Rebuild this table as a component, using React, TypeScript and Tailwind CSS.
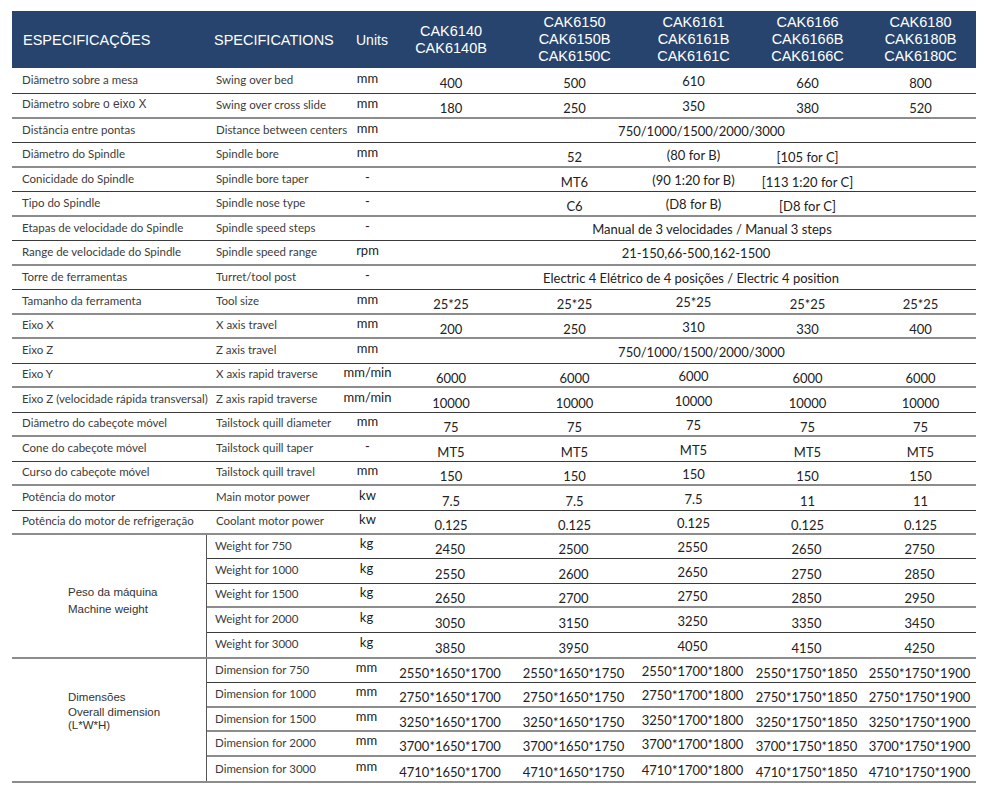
import React from 'react';

type Row = {
  pt: React.ReactNode;
  en: string;
  unit: string;
  vals?: string[];
  span?: string;
  spanPad?: string;
  line: 'dark' | 'grey';
};

const models = [
  ['CAK6140', 'CAK6140B'],
  ['CAK6150', 'CAK6150B', 'CAK6150C'],
  ['CAK6161', 'CAK6161B', 'CAK6161C'],
  ['CAK6166', 'CAK6166B', 'CAK6166C'],
  ['CAK6180', 'CAK6180B', 'CAK6180C'],
];

const valWidths = ['w-[122px]', 'w-[125px]', 'w-[113px]', 'w-[115px]', 'w-[111px]'];

const five = (v: string) => [v, v, v, v, v];

const rows: Row[] = [
  { pt: 'Diâmetro sobre a mesa', en: 'Swing over bed', unit: 'mm', vals: ['400', '500', '610', '660', '800'], line: 'dark' },
  {
    pt: (
      <span>
        Diâmetro sobre{' '}
        <span className="font-['Liberation_Sans',Arial,sans-serif] text-[12px]">o eixo X</span>
      </span>
    ),
    en: 'Swing over cross slide',
    unit: 'mm',
    vals: ['180', '250', '350', '380', '520'],
    line: 'grey',
  },
  { pt: 'Distância entre pontas', en: 'Distance between centers', unit: 'mm', span: '750/1000/1500/2000/3000', spanPad: 'pl-[37px]', line: 'dark' },
  { pt: 'Diâmetro do Spindle', en: 'Spindle bore', unit: 'mm', vals: ['', '52', '(80 for B)', '[105 for C]', ''], line: 'grey' },
  { pt: 'Conicidade do Spindle', en: 'Spindle bore taper', unit: '-', vals: ['', 'MT6', '(90 1:20 for B)', '[113 1:20 for C]', ''], line: 'dark' },
  { pt: 'Tipo do Spindle', en: 'Spindle nose type', unit: '-', vals: ['', 'C6', '(D8 for B)', '[D8 for C]', ''], line: 'grey' },
  { pt: 'Etapas de velocidade do Spindle', en: 'Spindle speed steps', unit: '-', span: 'Manual de 3 velocidades / Manual 3 steps', spanPad: 'pl-[58px]', line: 'dark' },
  { pt: 'Range de velocidade do Spindle', en: 'Spindle speed range', unit: 'rpm', span: '21-150,66-500,162-1500', spanPad: 'pl-[26px]', line: 'grey' },
  { pt: 'Torre de ferramentas', en: 'Turret/tool post', unit: '-', span: 'Electric 4 Elétrico de 4 posições / Electric 4 position', spanPad: 'pl-[16px]', line: 'dark' },
  { pt: 'Tamanho da ferramenta', en: 'Tool size', unit: 'mm', vals: five('25*25'), line: 'grey' },
  { pt: 'Eixo X', en: 'X axis travel', unit: 'mm', vals: ['200', '250', '310', '330', '400'], line: 'grey' },
  { pt: 'Eixo Z', en: 'Z axis travel', unit: 'mm', span: '750/1000/1500/2000/3000', spanPad: 'pl-[37px]', line: 'dark' },
  { pt: 'Eixo Y', en: 'X axis rapid traverse', unit: 'mm/min', vals: five('6000'), line: 'grey' },
  { pt: 'Eixo Z (velocidade rápida transversal)', en: 'Z axis rapid traverse', unit: 'mm/min', vals: five('10000'), line: 'dark' },
  { pt: 'Diâmetro do cabeçote móvel', en: 'Tailstock quill diameter', unit: 'mm', vals: five('75'), line: 'grey' },
  { pt: 'Cone do cabeçote móvel', en: 'Tailstock quill taper', unit: '-', vals: five('MT5'), line: 'dark' },
  { pt: 'Curso do cabeçote móvel', en: 'Tailstock quill travel', unit: 'mm', vals: five('150'), line: 'grey' },
  { pt: 'Potência do motor', en: 'Main motor power', unit: 'kw', vals: ['7.5', '7.5', '7.5', '11', '11'], line: 'dark' },
  { pt: 'Potência do motor de refrigeração', en: 'Coolant motor power', unit: 'kw', vals: five('0.125'), line: 'grey' },
];

const weights = [
  { en: 'Weight for 750', vals: ['2450', '2500', '2550', '2650', '2750'], line: 'dark' },
  { en: 'Weight for 1000', vals: ['2550', '2600', '2650', '2750', '2850'], line: 'dark' },
  { en: 'Weight for 1500', vals: ['2650', '2700', '2750', '2850', '2950'], line: 'grey' },
  { en: 'Weight for 2000', vals: ['3050', '3150', '3250', '3350', '3450'], line: 'dark' },
  { en: 'Weight for 3000', vals: ['3850', '3950', '4050', '4150', '4250'], line: 'none' },
];

const dims = [
  { en: 'Dimension for 750', pre: '2550', line: 'dark' },
  { en: 'Dimension for 1000', pre: '2750', line: 'grey' },
  { en: 'Dimension for 1500', pre: '3250', line: 'grey' },
  { en: 'Dimension for 2000', pre: '3700', line: 'grey' },
  { en: 'Dimension for 3000', pre: '4710', line: 'none' },
];

const dimTails = ['1650*1700', '1650*1750', '1700*1800', '1750*1850', '1750*1900'];

const lineClass = (l: string) =>
  l === 'dark' ? 'border-b border-[#3a3a3a]' : l === 'grey' ? 'border-b-2 border-[#8c8c8c]' : '';

const Values = ({ vals }: { vals: string[] }) => (
  <>
    {vals.map((v, i) => (
      <div
        key={i}
        className={`${valWidths[i]} flex justify-center items-center whitespace-nowrap ${i === 2 ? 'pt-[3px]' : 'pt-[7px]'}`}
      >
        {v}
      </div>
    ))}
  </>
);

const App: React.FC = () => {
  return (
    <div className="w-[1005px] h-[792px] bg-white pt-[11px] pl-[12px] text-[#222] font-['Lato',sans-serif]">
      <div className="w-[964px]">
        {/* header */}
        <div className="flex h-[57px] bg-[#27446e] text-white font-['Liberation_Sans',Arial,sans-serif] text-[14.5px] leading-[17px]">
          <div className="w-[195px] pl-[11px] flex items-center pt-[2px]">ESPECIFICAÇÕES</div>
          <div className="w-[138px] pl-[7px] flex items-center pt-[2px]">SPECIFICATIONS</div>
          <div className="w-[45px] pl-[11px] flex items-center pt-[2px] text-[14px]">Units</div>
          {models.map((m, i) => (
            <div key={i} className={`${valWidths[i]} flex flex-col justify-center items-center`}>
              {m.map((name) => (
                <span key={name}>{name}</span>
              ))}
            </div>
          ))}
        </div>

        {/* simple rows */}
        {rows.map((r, idx) => (
          <div
            key={idx}
            className={`flex ${idx === 0 ? 'h-[26px]' : 'h-[24.5px]'} ${lineClass(r.line)} text-[13px]`}
          >
            <div className="w-[195px] pl-[10px] flex items-center pb-[2px] text-[11.5px] text-[#3c3c3c] whitespace-nowrap">
              {r.pt}
            </div>
            <div className="w-[138px] pl-[9px] flex items-center pb-[2px] text-[11.5px] text-[#3c3c3c] whitespace-nowrap">
              {r.en}
            </div>
            <div className="w-[45px] flex justify-center items-center pb-[4px] whitespace-nowrap">{r.unit}</div>
            {r.span ? (
              <div className={`flex-1 flex justify-center items-center pt-[3px] whitespace-nowrap ${r.spanPad}`}>{r.span}</div>
            ) : (
              <Values vals={r.vals ?? []} />
            )}
          </div>
        ))}

        {/* weight block */}
        <div className="flex border-b-2 border-[#8c8c8c]">
          <div className="w-[195px] border-r border-[#555] flex flex-col pl-[56px] pt-[49px] font-['Liberation_Sans',Arial,sans-serif] text-[11.5px] leading-[17px] text-[#333]">
            <span>Peso da máquina</span>
            <span>Machine weight</span>
          </div>
          <div className="flex-1">
            {weights.map((w, idx) => (
              <div key={idx} className={`flex h-[24.4px] ${lineClass(w.line)} text-[13px]`}>
                <div className="w-[137px] pl-[8px] flex items-center pb-[2px] text-[11.5px] text-[#3c3c3c] whitespace-nowrap">
                  {w.en}
                </div>
                <div className="w-[45px] flex justify-center items-center pb-[5px]">kg</div>
                <Values vals={w.vals} />
              </div>
            ))}
          </div>
        </div>

        {/* dimension block */}
        <div className="flex border-b-2 border-[#8c8c8c]">
          <div className="w-[195px] border-r border-[#555] flex flex-col pl-[56px] pt-[30px] font-['Liberation_Sans',Arial,sans-serif] text-[11.5px] text-[#333]">
            <span className="leading-[16px]">Dimensões</span>
            <span className="leading-[15px]">Overall dimension</span>
            <span className="leading-[10px]">(L*W*H)</span>
          </div>
          <div className="flex-1">
            {dims.map((d, idx) => (
              <div key={idx} className={`flex h-[24.5px] ${lineClass(d.line)} text-[13px]`}>
                <div className="w-[137px] pl-[8px] flex items-center pb-[2px] text-[11.5px] text-[#3c3c3c] whitespace-nowrap">
                  {d.en}
                </div>
                <div className="w-[45px] flex justify-center items-center pb-[5px]">mm</div>
                <Values vals={dimTails.map((t) => `${d.pre}*${t}`)} />
              </div>
            ))}
          </div>
        </div>
      </div>
    </div>
  );
};

export default App;
